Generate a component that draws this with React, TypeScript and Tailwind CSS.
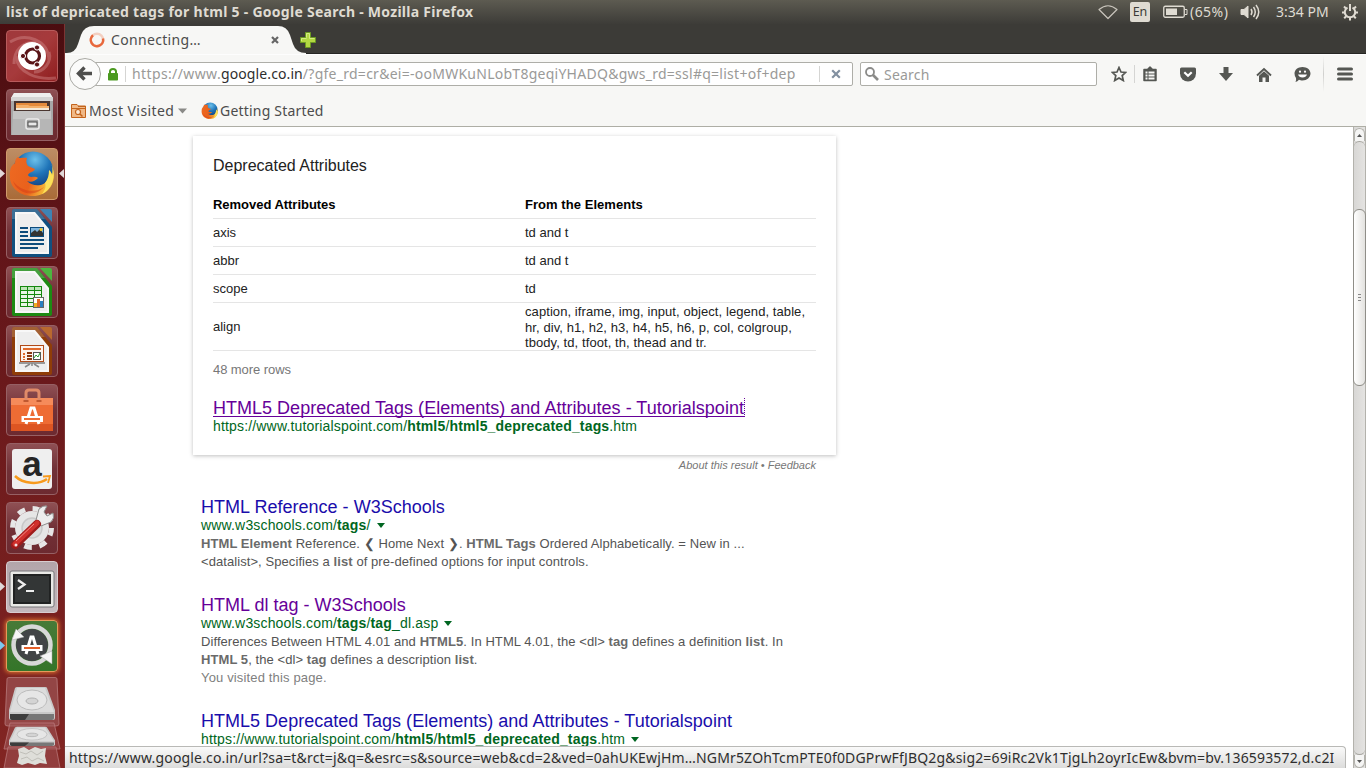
import type { ReactNode } from "react";

const UI = "font-['Noto_Sans',sans-serif] text-[14px] whitespace-pre";

function Tile({ className, children, left, right }: { className: string; children: ReactNode; left?: string; right?: boolean }) {
  return (
    <div className="relative h-[52px] w-[65px] shrink-0 pl-[6px]">
      {left && (
        <svg className={"absolute left-0 top-[21px] " + left} width="5" height="9" viewBox="0 0 5 9">
          <path d="M0 0L5 4.5L0 9Z" fill="currentColor" />
        </svg>
      )}
      <div className={"h-[52px] w-[52px] overflow-hidden rounded-[4px] border " + className}>
        <svg width="50" height="50" viewBox="1 1 50 50">{children}</svg>
      </div>
      {right && (
        <svg className="absolute left-[59px] top-[21px] text-[#e0d8d8]" width="5" height="9" viewBox="0 0 5 9">
          <path d="M5 0L0 4.5L5 9Z" fill="currentColor" />
        </svg>
      )}
    </div>
  );
}

const GLASS = "border-[#966064] bg-linear-to-b from-[#8f5054] via-[#713137] to-[#6d2a30]";

function Doc({ dark, light, children }: { dark: string; light: string; children: ReactNode }) {
  return (
    <g>
      <path d="M8 2H31L46 20V48Q46 50 44 50H8Q6 50 6 48V4Q6 2 8 2Z" fill={dark} />
      <path d="M34 2H44Q46 2 46 4V15Z" fill={light} />
      <path d="M6 12V4Q6 2 8 2H31L39 12Z" fill="#fff" opacity=".18" />
      <path d="M9 5H29L43 22V47H9Z" fill="#f8f8f8" />
      <path d="M11 7H28L41 23V45H11Z" fill="#eeeeee" />
      {children}
    </g>
  );
}

function FirefoxArt() {
  return (
    <g>
      <defs>
        <radialGradient id="globe" cx=".55" cy=".2" r=".8">
          <stop offset="0" stopColor="#6cc0ea" />
          <stop offset=".45" stopColor="#1f74b8" />
          <stop offset="1" stopColor="#0f2f6c" />
        </radialGradient>
        <linearGradient id="fox" x1="0" y1="0" x2="1" y2=".3">
          <stop offset="0" stopColor="#ee6a22" />
          <stop offset=".6" stopColor="#e9611c" />
          <stop offset="1" stopColor="#f7c53c" />
        </linearGradient>
      </defs>
      <circle cx="27" cy="24" r="20.500" fill="url(#globe)" />
      <path d="M12 9C14 11 17 9 21 10C20 13 20 15 22 18L29 21C28 24 23 24 22 27C24 31 28 27 32 30C29 33 25 35 21 33C28 40 39 38 42 31C44 28 44 25 43 22C45 24 46 26 46 28C47 24 47 19 45 15C53 31 44 48 27 48C12 48 2 38 4 24C4 20 6 17 9 15C9 12 10 10 12 9Z" fill="url(#fox)" />
      <path d="M43 22C45 24 46 26 46 28C47 24 47 19 45 15C51 29 46 41 36 46C40 41 40 38 39 35C42 31 43 27 43 22Z" fill="#fbe05a" />
      <path d="M7 33C14 43 28 46 38 39C29 50 11 46 7 33Z" fill="#d33b17" opacity=".5" />
    </g>
  );
}

function Drive() {
  return (
    <g>
      <path d="M10 11Q11 10 12 10H40Q42 10 42 11L50 33V41Q50 43 48 43H6Q4 43 4 41V33Z" fill="#c9c9c9" />
      <path d="M12 11H40L49 35H5Z" fill="#dcdcdc" />
      <ellipse cx="27" cy="23" rx="15" ry="10" fill="#e6e6e6" stroke="#bcbcbc" />
      <ellipse cx="27" cy="24" rx="6" ry="3" fill="#d4d4d4" stroke="#b0b0b0" />
      <path d="M5 37H49V41Q49 43 47 43H7Q5 43 5 41Z" fill="#777" />
      <path d="M5 37H24L20 43H7Q5 43 5 41Z" fill="#3d3d3d" />
    </g>
  );
}

function Launcher() {
  return (
    <aside className="flex h-[744px] w-[65px] shrink-0 flex-col gap-[7px] overflow-hidden border-r border-[#7c3433] bg-linear-to-b from-[#4b0d10] via-[#621519] via-30% to-[#822522] pt-[6px]">
      <Tile className="border-[#b85b5c] bg-linear-to-br from-[#a03a3c] via-[#a63b3c] to-[#8f1d1f]">
        <g fill="none" stroke="#e0a0a0" strokeWidth="3" opacity=".35">
          <path d="M4 12C20 2 42 10 43 30" />
          <path d="M8 34C8 20 16 12 30 12" />
          <path d="M50 48C32 50 12 44 10 26" />
          <path d="M43 22C46 32 38 42 28 42" />
        </g>
        <circle cx="26" cy="26" r="14" fill="#fff" />
        <circle cx="26.500" cy="26" r="7" fill="none" stroke="#5a1518" strokeWidth="3.200" />
        <g fill="#5a1518" stroke="#fff" strokeWidth="1">
          <circle cx="17" cy="26" r="2.600" />
          <circle cx="31" cy="17.500" r="2.600" />
          <circle cx="31" cy="34.500" r="2.600" />
        </g>
      </Tile>
      <Tile className={GLASS}>
        <path d="M8 4H44L47 9V46H5V9Z" fill="#a7a7a7" />
        <path d="M8 4H44L47 9H5Z" fill="#eee" />
        <path d="M5 8H47V12H5Z" fill="#d4d4d4" />
        <path d="M8 12H44V22H8Z" fill="#4a3630" />
        <path d="M10 14H41V21H10Z" fill="#e58a3a" />
        <path d="M10 16H22L24 17H43V21H10Z" fill="#f4b06a" />
        <path d="M10 19H43V21H10Z" fill="#f5e8d5" />
        <path d="M7 22H45L46 46H6Z" fill="#b6b6b6" />
        <path d="M7 22H45V30H7Z" fill="#c4c4c4" />
        <rect x="20" y="30" width="13" height="10" rx="2" fill="#a5a5a5" stroke="#ececec" strokeWidth="1.500" />
        <rect x="22" y="33" width="9" height="4" fill="#e8e8e8" stroke="#4f4f4f" />
      </Tile>
      <Tile className="border-[#d09a6c] bg-linear-to-b from-[#bd8d64] to-[#a96b38]" left="text-[#e0d8d8]" right>
        <FirefoxArt />
      </Tile>
      <Tile className={GLASS}>
        <Doc dark="#11507f" light="#3e83b4">
          <g fill="#0d4c7c">
            <path d="M14 20h8v2h-8zM14 24h8v2h-8zM14 28h8v2h-8zM14 32h24v2H14zM14 36h24v2H14zM14 40h18v2H14z" />
          </g>
          <rect x="24.500" y="20.500" width="13" height="9" fill="#7fb5dd" stroke="#0d4c7c" />
          <path d="M25 29V26L29 23L31 25L34 22L37 26V29Z" fill="#333" />
          <circle cx="35" cy="22.500" r="1.500" fill="#f5c928" />
        </Doc>
      </Tile>
      <Tile className={GLASS}>
        <Doc dark="#1d8a13" light="#4db53f">
          <rect x="14" y="20" width="22" height="21" fill="#15880e" />
          <g fill="#bfe5b8">
            <path d="M15 21h6v3h-6zM22 21h6v3h-6zM29 21h6v3h-6z" />
          </g>
          <g fill="#e9f6e7">
            <path d="M15 25h6v3h-6zM22 25h6v3h-6zM29 25h6v3h-6zM15 29h6v3h-6zM22 29h6v3h-6zM29 29h6v3h-6zM15 33h6v3h-6zM22 33h6v3h-6zM15 37h6v3h-6zM22 37h6v3h-6z" />
          </g>
          <rect x="27.500" y="31.500" width="10" height="10" fill="#fff" stroke="#666" />
          <path d="M28 37h3v4h-3z" fill="#f0b020" />
          <path d="M31 33h3v8h-3z" fill="#e06a25" />
          <path d="M34 35h3v6h-3z" fill="#2a7fc0" />
        </Doc>
      </Tile>
      <Tile className={GLASS}>
        <Doc dark="#8f3d08" light="#b9692f">
          <rect x="14.500" y="20.500" width="23" height="16" fill="#fdf4ee" stroke="#b04a18" />
          <path d="M17 23h18v2H17z" fill="#e06a2c" />
          <path d="M17 28h2v2h-2zM17 31h2v2h-2zM17 34h2v1h-2z" fill="#e06a2c" />
          <path d="M21 27h5v2h-5zM21 30h5v2h-5zM21 33h5v2h-5z" fill="#8a3810" />
          <rect x="27.500" y="27.500" width="7" height="7" fill="#fff" stroke="#555" />
          <path d="M28 33L30 30L32 32L34 28" fill="none" stroke="#2c9a2c" />
          <path d="M13 37h26v2H13z" fill="#999" />
          <path d="M24 39L19 42M28 39L33 42M26 38V41" stroke="#888" strokeWidth="1.500" />
        </Doc>
      </Tile>
      <Tile className={GLASS}>
        <path d="M5 14H47V47H5Z" fill="#ee6c34" />
        <path d="M5 14H47V21H5Z" fill="#f58b5a" />
        <path d="M5 40H47V47H5Z" fill="#dd5522" />
        <path d="M20 17V9Q20 6 23 6H30Q33 6 33 9V17" fill="none" stroke="#e08a68" strokeWidth="3" />
        <path d="M17.500 17H22.500M30.500 17H35.500" stroke="#b04a22" strokeWidth="1.500" />
        <g fill="none" stroke="#fff" strokeWidth="3">
          <path d="M20 40L25 24H28L33 40M17 33.500H35.500V36.500H17Z" />
        </g>
        <path d="M18 35H34" stroke="#ee6c34" strokeWidth="2" />
      </Tile>
      <Tile className={GLASS}>
        <rect x="6" y="6" width="40" height="40" rx="3" fill="#efefef" />
        <text x="26" y="33" textAnchor="middle" fontFamily="Liberation Sans, sans-serif" fontWeight="bold" fontSize="35" fill="#252525">a</text>
        <path d="M9 33C17 41 33 42 41 36" fill="none" stroke="#f79a1c" strokeWidth="2.500" />
        <path d="M37 33.500L44 33L42 40" fill="none" stroke="#f79a1c" strokeWidth="1.800" />
      </Tile>
      <Tile className={GLASS}>
        <circle cx="26" cy="26" r="19.500" fill="none" stroke="#e6e6e6" strokeWidth="5" strokeDasharray="7.660 7.660" />
        <circle cx="26" cy="26" r="17" fill="#e6e6e6" />
        <circle cx="26" cy="26" r="10" fill="#dcdcdc" stroke="#c8c8c8" strokeWidth="1.500" />
        <path d="M30 18L33 7Q37 3 41 4L38 10L41 14L47 11Q49 16 45 20L35 24Z" fill="#ededed" stroke="#8c8c8c" />
        <path d="M9 43L31 22" stroke="#9e1b1b" strokeWidth="8" strokeLinecap="round" />
        <path d="M9 42L31 21" stroke="#d0302c" strokeWidth="5" strokeLinecap="round" />
        <path d="M10 39L28 22" stroke="#f08a84" strokeWidth="1" />
        <circle cx="10" cy="43" r="1.500" fill="#f3e5e5" />
      </Tile>
      <Tile className="border-[#d8cdd0] bg-linear-to-b from-[#b3a5aa] to-[#c3b9bd]" left="text-[#e0d8d8]">
        <rect x="4" y="10" width="44" height="36" rx="2" fill="#e9e9e6" stroke="#77777a" />
        <rect x="7" y="13" width="38" height="30" fill="#202222" />
        <rect x="9" y="15" width="34" height="26" fill="#333636" />
        <path d="M12 19L18.500 23.500L12 28" fill="none" stroke="#eee" strokeWidth="2.300" />
        <path d="M20 30H28" stroke="#eee" strokeWidth="2" />
      </Tile>
      <Tile className="border-[#e69a5c] bg-linear-to-b from-[#477a38] to-[#347529] shadow-[0_0_4px_1px_#d9702f]" left="text-[#7cc8ef]">
        <circle cx="26" cy="25" r="16" fill="#414446" />
        <circle cx="26" cy="25" r="18.500" fill="none" stroke="#d8d8d8" strokeWidth="4.500" />
        <path d="M6 20L10 9L18 17Z" fill="#f6f6f6" stroke="#a7a7a7" strokeWidth=".5" />
        <path d="M46 31L34 36L46 44Z" fill="#f6f6f6" stroke="#a7a7a7" strokeWidth=".5" />
        <g fill="none" stroke="#fff" strokeWidth="3">
          <path d="M20 34L25 17H27L32 34M17 26.500H35V29.500H17Z" />
        </g>
        <path d="M18 28H34" stroke="#e4602a" strokeWidth="2" />
      </Tile>
      <svg className="-mt-[2px] shrink-0" width="64" height="91" viewBox="0 0 64 91">
        <path d="M9 .5H55Q57 .5 57 2L59 47Q59 49 56 49H8Q5 49 5 47L7 2Q7 .5 9 .5Z" fill="#a9676a" fillOpacity=".5" stroke="#b87b7c" strokeOpacity=".8" />
        <path d="M10 46H54L60 72H4Z" fill="#a15557" fillOpacity=".55" stroke="#b87778" strokeOpacity=".8" />
        <g transform="translate(5 0)"><Drive /></g>
        <g transform="translate(5 44) scale(1 .58)"><Drive /></g>
        <path d="M8 70H56L60 91H4Z" fill="#a15557" fillOpacity=".5" stroke="#b87778" strokeOpacity=".8" />
        <path d="M18 72L24 70L29 73L35 70L41 72L46 71L45 79L47 87L40 86L35 88L28 86L22 88L17 86L19 79Z" fill="#deded9" />
        <path d="M20 75L26 77L31 74L37 78L43 74M21 82L27 80L32 84L38 81L44 84" fill="none" stroke="#c0bfb9" />
      </svg>
    </aside>
  );
}

function TopBar() {
  return (
    <header className={"flex h-[24px] items-center bg-linear-to-b from-[#5d5b51] to-[#3d3c38] text-[#dfdbd2] " + UI}>
      <div className="w-[1090px] pl-[6px] font-bold leading-[24px] tracking-[0.27px]">list of depricated tags for html 5 - Google Search - Mozilla Firefox</div>
      <svg className="ml-[8px]" width="20" height="24" viewBox="0 0 20 24" fill="none" stroke="#c9c5bc" strokeWidth="1.200">
        <path d="M1 9.500Q10 2 19 9.500L10 18.500Z" strokeLinejoin="round" />
      </svg>
      <div className="ml-[12px] h-[20px] w-[20px] rounded-[2px] bg-[#dfdbd2] text-center text-[12.5px] leading-[20px] text-[#3c3b37]">En</div>
      <svg className="ml-[13px]" width="25" height="14" viewBox="0 0 25 14">
        <rect x=".75" y="1.250" width="20.500" height="11" rx="1.500" fill="none" stroke="#dfdbd2" strokeWidth="1.300" />
        <rect x="3" y="3.500" width="11" height="6.500" fill="#dfdbd2" />
        <path d="M22 4.500h2v5h-2" fill="none" stroke="#dfdbd2" />
      </svg>
      <div className="-mt-px ml-[2px] w-[39px] tracking-[0.45px]">(65%)</div>
      <svg className="ml-[11px]" width="22" height="18" viewBox="0 0 22 18" fill="none" stroke="#dfdbd2">
        <path d="M1 6.500H4L8 3V15L4 11.500H1Z" fill="#dfdbd2" />
        <path d="M11 6Q13 9 11 12" strokeWidth="1.500" />
        <path d="M13.500 4Q17 9 13.500 14" strokeWidth="1.500" />
        <path d="M16 2Q21.500 9 16 16" strokeWidth="1.500" />
      </svg>
      <div className="-mt-px ml-[14px] w-[54px]">3:34 PM</div>
      <svg className="ml-[11px]" width="18" height="18" viewBox="0 0 18 18" fill="none" stroke="#dfdbd2">
        <path d="M6.500 4.600A5.200 5.200 0 1 0 11.500 4.600" strokeWidth="2" />
        <path d="M9 1V8" strokeWidth="2" />
        <path d="M1 9.500H4M14 9.500H17M3 3.500L5.200 5.700M15 3.500L12.800 5.700M3.200 15.200L5.200 13.200M14.800 15.200L12.800 13.200M9 14.500V17.500" strokeWidth="2" />
      </svg>
    </header>
  );
}

function TabStrip() {
  return (
    <div className={"flex h-[30px] border-b border-[#262623] bg-[#3c3b37] " + UI}>
      <div className="relative h-[30px] w-[238px]">
        <svg className="absolute left-0 top-0" width="242" height="30" viewBox="0 0 242 30">
          <path d="M0 30V29Q10 30 13 20L16 11Q19 2 29 2H213Q222 2 225 11L228 20Q231 29 241 29V30Z" fill="#f7f7f5" />
        </svg>
        <div className="relative flex h-[30px] items-center pl-[24px] pt-[2px]">
          <svg width="16" height="16" viewBox="0 0 16 16" fill="none">
            <circle cx="8" cy="8" r="6.200" stroke="#f3cfc0" strokeWidth="2.500" />
            <path d="M4 3.200A6.200 6.200 0 1 0 14 6.500" stroke="#e8683c" strokeWidth="2.500" />
          </svg>
          <div className="-mt-px ml-[6px] w-[159px] tracking-[0.33px] text-[#4c4c4c]">Connecting…</div>
          <svg className="ml-[1px]" width="8" height="8" viewBox="0 0 8 8">
            <path d="M1 1L7 7M7 1L1 7" stroke="#666" strokeWidth="2.200" />
          </svg>
        </div>
      </div>
      <svg className="-ml-[3px] mt-[8px]" width="16" height="16" viewBox="0 0 16 16">
        <path d="M5.500 .5h5v5h5v5h-5v5h-5v-5h-5v-5h5z" fill="#b2d742" stroke="#6c9a22" />
        <path d="M6.500 5.500v-4h3v5h5M1.500 9V6.500h5" fill="none" stroke="#d4ec83" />
      </svg>
    </div>
  );
}

function NavBar() {
  const c = "#555753";
  return (
    <div className={"flex h-[40px] border-t border-[#fdfdfd] bg-[#f7f7f5] pl-[4px] text-[#9a9a98] " + UI}>
      <svg className="z-10 mt-[3px]" width="32" height="32" viewBox="0 0 32 32">
        <circle cx="16" cy="16" r="15.500" fill="#fbfbfa" stroke="#a9a9a4" />
        <path d="M15.500 9.500L9.500 15.500L15.500 21.500M10 15.500H23" fill="none" stroke="#4f4f4d" strokeWidth="3.400" />
      </svg>
      <div className="-ml-[7px] mt-[7px] flex h-[24px] w-[759px] items-center rounded-[2px] border border-[#aeaea8] bg-white pl-[12px]">
        <svg width="12" height="14" viewBox="0 0 12 14">
          <path d="M3 7V4.500Q3 2 6 2T9 4.500V7" fill="none" stroke="#4b9a20" strokeWidth="2" />
          <rect x="1" y="6" width="10" height="7.500" rx=".8" fill="#4b9a20" />
        </svg>
        <div className="ml-[6px] h-[16px] w-px bg-[#d5d5d3]" />
        <div className="ml-[6px] w-[666px] overflow-hidden leading-[22px]">
          <span className="tracking-[0.38px]">https://www.</span>
          <span className="tracking-[0.1px] text-[#2e2e2e]">google.co.in</span>
          <span className="tracking-[0.26px]">/?gfe_rd=cr&amp;ei=-ooMWKuNLobT8geqiYHADQ&amp;gws_rd=ssl#q=list+of+dep</span>
        </div>
        <div className="ml-[21px] h-[16px] w-px bg-[#d5d5d3]" />
        <svg className="ml-[11px]" width="10" height="10" viewBox="0 0 10 10">
          <path d="M1.200 1.200L8.800 8.800M8.800 1.200L1.200 8.800" stroke="#8290a0" strokeWidth="2.200" />
        </svg>
      </div>
      <div className="ml-[7px] mt-[7px] flex h-[24px] w-[237px] items-center rounded-[2px] border border-[#aeaea8] bg-white pl-[4px]">
        <svg width="14" height="14" viewBox="0 0 14 14" fill="none" stroke="#8b8b89">
          <circle cx="5" cy="5" r="4" strokeWidth="1.800" />
          <path d="M8 8L13 13" strokeWidth="2.600" />
        </svg>
        <div className="ml-[5px] tracking-[0.2px]">Search</div>
      </div>
      <div className="ml-[14px] mt-[3px] flex h-[32px] items-center">
        <svg width="16" height="16" viewBox="0 0 16 16">
          <path d="M8 1.500L10 6L14.700 6.400L11.200 9.600L12.300 14.500L8 11.900L3.700 14.500L4.800 9.600L1.300 6.400L6 6Z" fill="none" stroke={c} strokeWidth="1.700" />
        </svg>
        <div className="ml-[7px] h-[18px] w-px bg-[#d5d5d3]" />
        <svg className="ml-[8px]" width="14" height="16" viewBox="0 0 14 16">
          <path d="M1 3.500H4.500L7 1L9.500 3.500H13V14.500H1Z" fill={c} stroke={c} strokeWidth="1.500" strokeLinejoin="round" />
          <path d="M2.500 5.500h2v2h-2zM5.500 5.500h6v2h-6zM2.500 8.500h2v2h-2zM5.500 8.500h6v2h-6zM2.500 11.500h2v2h-2zM5.500 11.500h6v2h-6z" fill="#f7f7f5" />
        </svg>
        <svg className="ml-[23px]" width="16" height="15" viewBox="0 0 16 15">
          <path d="M1.500 .5H14.500Q16 .5 16 2V6.500A8 8 0 0 1 0 6.500V2Q0 .5 1.500 .5Z" fill={c} />
          <path d="M4.300 5.300L8 8.800L11.700 5.300" fill="none" stroke="#fff" strokeWidth="2.200" />
        </svg>
        <svg className="ml-[23px]" width="14" height="14" viewBox="0 0 14 14">
          <path d="M4.500 0H9.500V6H14L7 14L0 6H4.500Z" fill={c} />
        </svg>
        <svg className="ml-[23px]" width="16" height="15" viewBox="0 0 16 15">
          <path d="M1 8.500L8 2L15 8.500" fill="none" stroke={c} strokeWidth="1.900" />
          <path d="M3 8.700L8 4.200L13 8.700V15H9.500V10.500H6.500V15H3Z" fill={c} />
        </svg>
        <svg className="ml-[22px]" width="17" height="15" viewBox="0 0 17 15">
          <path d="M8.500 0C13 0 16.500 2.800 16.500 6.500S13 13.500 8.500 13.500C7 13.500 6 13.300 5 12.800Q3.500 14.500 1.500 15Q2.500 13.500 2 11Q.5 9 .5 6.500C.5 2.800 4 0 8.500 0Z" fill={c} />
          <circle cx="6" cy="4.700" r="1.100" fill="#fff" />
          <circle cx="11" cy="4.700" r="1.100" fill="#fff" />
          <path d="M4 7.500H13Q12 10.500 8.500 10.500T4 7.500Z" fill="#fff" />
        </svg>
        <div className="ml-[12px] h-[36px] w-px bg-linear-to-b from-[#f7f7f5] via-[#d0d0ce] to-[#f7f7f5]" />
        <svg className="ml-[13px]" width="16" height="14" viewBox="0 0 16 14">
          <path d="M1.500 2H14.500M1.500 7H14.500M1.500 12H14.500" stroke={c} strokeWidth="3" strokeLinecap="round" />
        </svg>
      </div>
    </div>
  );
}

function Bookmarks() {
  return (
    <div className={"flex h-[33px] items-center border-b border-[#aeaea5] bg-[#f7f7f5] pl-[6px] text-[#4c4c4c] " + UI}>
      <svg width="15" height="15" viewBox="0 0 15 15">
        <path d="M.5 1.500H6L7.500 3H14.500V14.500H.5Z" fill="#f0b987" stroke="#c4641c" />
        <path d="M1 5.500H14M7 3.500H14" stroke="#c4641c" />
        <circle cx="7" cy="9" r="2.500" fill="#fbe9d8" stroke="#c4641c" strokeWidth="1.200" />
        <path d="M9 11L11.500 13.500" stroke="#c4641c" strokeWidth="1.500" />
      </svg>
      <div className="ml-[3px] w-[86px] tracking-[0.4px]">Most Visited</div>
      <svg className="ml-[3px] mt-[2px]" width="9" height="6" viewBox="0 0 9 6">
        <path d="M0 .5H9L4.500 5.500Z" fill="#8a8a87" />
      </svg>
      <svg className="ml-[14px]" width="18" height="17" viewBox="3 2 47 46">
        <FirefoxArt />
      </svg>
      <div className="ml-px tracking-[0.2px]">Getting Started</div>
    </div>
  );
}

const ROWS = [
  ["axis", "td and t"],
  ["abbr", "td and t"],
  ["scope", "td"],
];

function Caret() {
  return (
    <svg className="mb-[2px] ml-[6px] inline-block" width="8" height="5" viewBox="0 0 8 5">
      <path d="M0 0H8L4 5Z" fill="#006621" />
    </svg>
  );
}

function Result({ title, url, visited, children, className }: { title: string; url: ReactNode; visited?: boolean; children?: ReactNode; className: string }) {
  return (
    <article className={"ml-[136px] whitespace-pre " + className}>
      <h3 className={"h-[18px] text-[18px] leading-[18px] tracking-[0.016px] " + (visited ? "text-[#609]" : "text-[#1a0dab]")}>{title}</h3>
      <div className="h-[18px] text-[14px] leading-[18px] tracking-[0.165px] text-[#006621]">{url}<Caret /></div>
      <div className="pt-px text-[13px] leading-[18px] tracking-[0.075px] text-[#545454] [&_b]:text-[#6a6a6a]">{children}</div>
    </article>
  );
}

function Page() {
  return (
    <main className="h-[619px] w-[1288px] overflow-hidden bg-white font-['Liberation_Sans',sans-serif] text-[#222]">
      <section className="ml-[128px] mt-[9px] h-[319px] w-[643px] px-[20px] shadow-[0_1px_4px_rgba(0,0,0,0.25)]">
        <h2 className="pt-[20px] text-[16px] leading-[20px]">Deprecated Attributes</h2>
        <div className="mt-[14px] text-[13px]">
          <div className="grid h-[29px] grid-cols-[312px_291px] items-center border-b border-[#e5e5e5] pt-px font-bold text-black">
            <div className="tracking-[-0.03px]">Removed Attributes</div>
            <div className="tracking-[0.05px]">From the Elements</div>
          </div>
          {ROWS.map(([a, b]) => (
            <div key={a} className="grid h-[28px] grid-cols-[312px_291px] items-center border-b border-[#e5e5e5]">
              <div>{a}</div>
              <div>{b}</div>
            </div>
          ))}
          <div className="grid h-[48px] grid-cols-[312px_291px] items-center border-b border-[#e5e5e5] leading-[15.6px]">
            <div>align</div>
            <div className="whitespace-pre pt-px tracking-[0.08px]">{"caption, iframe, img, input, object, legend, table,\nhr, div, h1, h2, h3, h4, h5, h6, p, col, colgroup,\ntbody, td, tfoot, th, thead and tr."}</div>
          </div>
        </div>
        <div className="pt-[9px] text-[13px] leading-[20px] tracking-[-0.07px] text-[#777]">48 more rows</div>
        <div className="mt-[18px] flex h-[19px]">
          <span className="h-[19px] whitespace-pre border-b border-r border-b-[#609] border-r-[#609] text-[18px] leading-[20px] tracking-[0.016px] text-[#609] [border-right-style:dotted]">HTML5 Deprecated Tags (Elements) and Attributes - Tutorialspoint</span>
        </div>
        <div className="text-[14px] leading-[18px] tracking-[0.165px] text-[#006621]">
          https://www.tutorialspoint.com/<b>html5</b>/<b>html5_deprecated_tags</b>.htm
        </div>
      </section>
      <div className="ml-[128px] w-[623px] pt-[2px] text-right text-[11px] italic leading-[16px] text-[#777]">About this result • Feedback</div>
      <Result className="mt-[25px]" title="HTML Reference - W3Schools" url={<>www.w3schools.com/<b>tags</b>/</>}>
        <b>HTML Element</b> Reference. ❮ Home Next ❯. <b>HTML Tags</b> Ordered Alphabetically. = New in ...{"\n"}
        {"<datalist>, Specifies a "}<b>list</b> of pre-defined options for input controls.
      </Result>
      <Result className="mt-[25px]" visited title="HTML dl tag - W3Schools" url={<>www.w3schools.com/<b>tags</b>/<b>tag</b>_dl.asp</>}>
        Differences Between HTML 4.01 and <b>HTML5</b>. In HTML 4.01, the {"<dl>"} <b>tag</b> defines a definition <b>list</b>. In{"\n"}
        <b>HTML 5</b>, the {"<dl>"} <b>tag</b> defines a description <b>list</b>.{"\n"}
        <span className="tracking-[0.15px] text-[#808080]">You visited this page.</span>
      </Result>
      <Result className="mt-[25px]" title="HTML5 Deprecated Tags (Elements) and Attributes - Tutorialspoint" url={<>https://www.tutorialspoint.com/<b>html5</b>/<b>html5_deprecated_tags</b>.htm</>} />
    </main>
  );
}

function Scrollbar() {
  return (
    <div className="flex h-[641px] w-[13px] flex-col border-x border-[#b3b2ac] bg-linear-to-r from-[#d8d7d5] to-[#e4e3e1] pt-px">
      <div className="flex h-[13px] items-center justify-center rounded-t-[6px] border border-b-0 border-[#b3b2ac] bg-[#f5f5f4]">
        <svg width="5" height="3" viewBox="0 0 5 3"><path d="M0 3H5L2.500 0Z" fill="#555" /></svg>
      </div>
      <div className="h-[68px] rounded-t-[6px] border-t border-[#a5a49e]" />
      <div className="-mx-px flex h-[177px] flex-col items-center justify-center gap-[2px] rounded-[6px] border border-[#8f8e88] bg-linear-to-r from-white to-[#e3e2df]">
        <div className="h-px w-[3px] bg-[#888]" />
        <div className="h-px w-[3px] bg-[#888]" />
        <div className="h-px w-[3px] bg-[#888]" />
      </div>
      <div className="grow rounded-b-[6px] border-b border-[#a5a49e]" />
      <div className="flex h-[13px] items-center justify-center rounded-b-[6px] border border-t-0 border-[#b3b2ac] bg-[#f5f5f4]">
        <svg width="5" height="3" viewBox="0 0 5 3"><path d="M0 0H5L2.500 3Z" fill="#555" /></svg>
      </div>
    </div>
  );
}

export default function App() {
  return (
    <div className="h-[768px] w-[1366px] overflow-hidden bg-white">
      <TopBar />
      <div className="flex">
        <Launcher />
        <div className="w-[1301px]">
          <TabStrip />
          <NavBar />
          <Bookmarks />
          <div className="flex">
            <div className="w-[1288px]">
              <Page />
              <div className={"h-[22px] w-[1281px] rounded-tr-[4px] border-r border-t border-[#b9b9b6] bg-linear-to-b from-[#fafafa] to-[#dcdcdb] pl-[4px] leading-[22px] tracking-[0.168px] text-[#2e2e2e] " + UI}>
                https://www.google.co.in/url?sa=t&amp;rct=j&amp;q=&amp;esrc=s&amp;source=web&amp;cd=2&amp;ved=0ahUKEwjHm…NGMr5ZOhTcmPTE0f0DGPrwFfJBQ2g&amp;sig2=69iRc2Vk1TjgLh2oyrIcEw&amp;bvm=bv.136593572,d.c2I
              </div>
            </div>
            <Scrollbar />
          </div>
        </div>
      </div>
    </div>
  );
}
